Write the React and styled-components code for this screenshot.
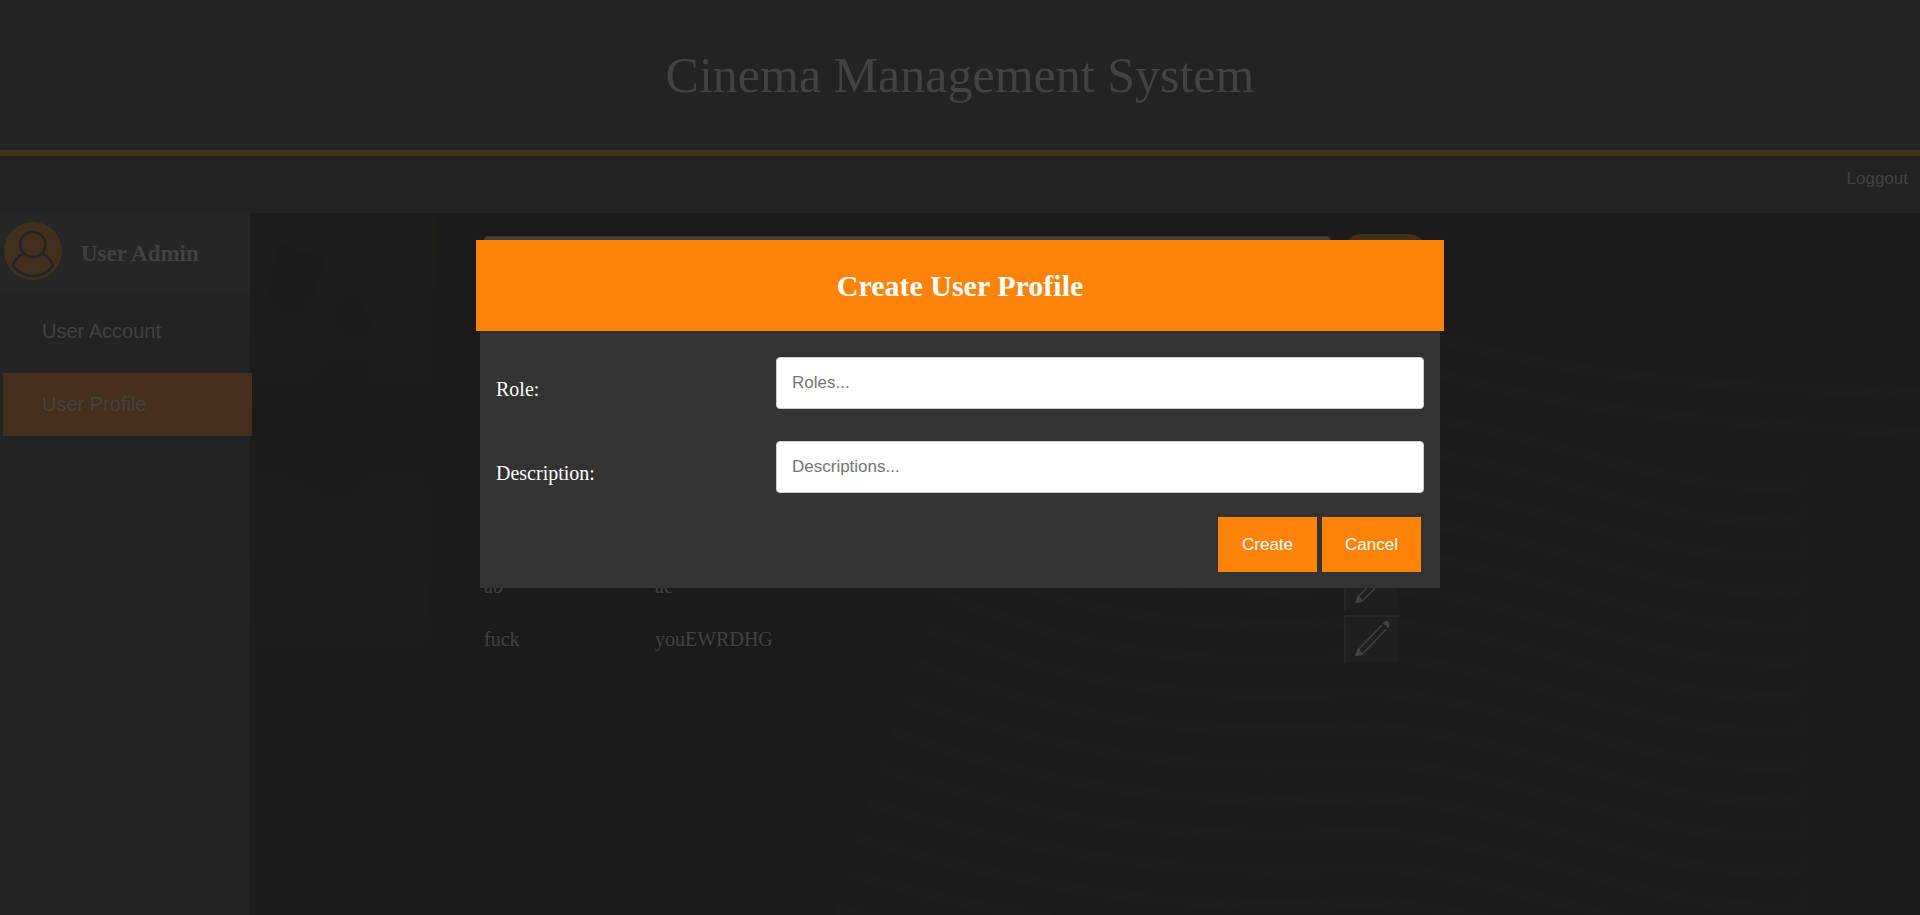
import React from "react";
import styled, { createGlobalStyle } from "styled-components";

const serif = '"Liberation Serif", "Times New Roman", serif';
const sans = '"Liberation Sans", Arial, sans-serif';

const c = {
  page: "#1b1b1b",
  panel: "#232323",
  panelLight: "#262626",
  dimText: "#424242",
  dimOrange: "#442e1c",
  orange: "#ff8307",
  modal: "#333333",
};

const GlobalStyle = createGlobalStyle`
  *, *::before, *::after { box-sizing: border-box; }
  body {
    margin: 0;
    background: ${c.page};
    color: ${c.dimText};
    font-family: ${serif};
    font-size: 20px;
  }
`;

const Page = styled.div`
  min-height: 100vh;
  display: flex;
  flex-direction: column;
`;

const Header = styled.header`
  height: 156px;
  display: flex;
  align-items: center;
  justify-content: center;
  background: ${c.panel};
  border-bottom: 6px solid ${c.dimOrange};
`;

const Title = styled.h1`
  margin: 0;
  font-size: 50px;
  font-weight: 400;
`;

const TopNav = styled.nav`
  height: 57px;
  display: flex;
  justify-content: flex-end;
  align-items: flex-start;
  padding: 13px 12px;
  background: ${c.panel};
`;

const NavLink = styled.a`
  font-family: ${sans};
  font-size: 17px;
  line-height: 20px;
  color: ${c.dimText};
  text-decoration: none;
`;

const Body = styled.div`
  flex: 1;
  display: flex;
`;

const Sidebar = styled.aside`
  width: 250px;
  flex: none;
  background: ${c.panel};
  z-index: 1;
`;

const Identity = styled.div`
  height: 82px;
  display: flex;
  align-items: center;
  gap: 19px;
  padding: 0 4px 6px;
  background: ${c.panelLight};
`;

const Avatar = styled.svg`
  width: 58px;
  height: 58px;
  flex: none;
`;

const IdentityName = styled.h2`
  margin: 6px 0 0;
  font-size: 23px;
  line-height: 26px;
`;

const SideMenu = styled.nav`
  display: flex;
  flex-direction: column;
  gap: 10px;
  padding: 5px 0;
  margin: 0 -2px 0 3px;
`;

const SideLink = styled.a`
  padding: 20px 39px;
  font-family: ${sans};
  font-size: 20px;
  line-height: 23px;
  color: ${c.dimText};
  text-decoration: none;
  background: ${(p) => (p.$active ? c.dimOrange : "transparent")};
`;

const Main = styled.main`
  flex: 1;
  position: relative;
  min-width: 0;
`;

const Backdrop = styled.svg`
  position: absolute;
  inset: 0;
  width: 100%;
  height: 100%;
`;

const Content = styled.div`
  position: relative;
  width: calc(50vw - 16px);
  margin-left: calc(25vw - 246px);
  padding-top: 21px;
`;

const SearchRow = styled.form`
  display: flex;
  align-items: center;
  gap: 11px;
`;

const SearchInput = styled.input`
  flex: 1;
  height: 52px;
  background: ${c.dimText};
  border: 1px solid #383838;
  border-radius: 4px;
`;

const AddButton = styled.button`
  width: 86px;
  height: 56px;
  border: 0;
  border-radius: 20px;
  background: ${c.dimOrange};
`;

const Profiles = styled.table`
  width: 100%;
  margin-top: 270px;
  table-layout: fixed;
  border-collapse: collapse;
`;

const Cell = styled.td`
  width: ${(p) => p.$width || "auto"};
  height: 53px;
  padding: 15px 0 0;
  line-height: 23px;
  vertical-align: top;
`;

const ActionCell = styled(Cell)`
  padding: 2px 0 0;
`;

const EditButton = styled.button`
  display: block;
  width: 56px;
  height: 49px;
  padding: 0;
  background: #1f1f1f;
  border: 2px solid;
  border-color: #262626 #1c1c1c #1c1c1c #262626;

  svg {
    display: block;
    width: 52px;
    height: 44px;
  }
`;

const Dialog = styled.section`
  position: fixed;
  top: 240px;
  left: 25%;
  width: 50%;
  z-index: 2;
  background: ${c.modal};
  color: #fff;
`;

const DialogHeader = styled.header`
  height: 91px;
  margin: 0 -4px;
  display: flex;
  align-items: center;
  justify-content: center;
  background: ${c.orange};
`;

const DialogTitle = styled.h2`
  margin: 0;
  font-size: 30px;
`;

const DialogForm = styled.form`
  display: flex;
  flex-direction: column;
  gap: 32px;
  padding: 26px 16px 16px;
`;

const Field = styled.div`
  display: grid;
  grid-template-columns: 280px 1fr;
`;

const Label = styled.label`
  padding-top: 21px;
  line-height: 23px;
`;

const TextInput = styled.input`
  height: 52px;
  padding: 0 15px;
  border: 1px solid #cccccc;
  border-radius: 4px;
  background: #fff;
  font-family: ${sans};
  font-size: 17px;

  &::placeholder {
    color: #757575;
    opacity: 1;
  }
`;

const Actions = styled.div`
  display: flex;
  justify-content: flex-end;
  gap: 5px;
  margin-top: -8px;
  padding-right: 3px;
`;

const ActionButton = styled.button`
  width: 99px;
  height: 55px;
  padding: 0;
  border: 0;
  background: ${c.orange};
  color: #fff;
  font-family: ${sans};
  font-size: 17px;
`;

const waves = Array.from({ length: 17 }, (_, i) => i * 35);

function WavePattern() {
  return (
    <Backdrop aria-hidden="true" viewBox="0 0 1670 702" preserveAspectRatio="xMinYMin slice">
      <defs>
        <linearGradient id="warm" x1="0" x2="0" y1="0" y2="1">
          <stop offset="0" stopColor="#1e1d1a" />
          <stop offset="0.4" stopColor="#1d1b1a" />
          <stop offset="0.8" stopColor="#1d1b1b" />
          <stop offset="1" stopColor="#1b1b1b" />
        </linearGradient>
      </defs>
      <path d="M0 0H188C180 80 186 200 180 300S184 420 176 480C120 500 60 490 0 500Z" fill="url(#warm)" />
      <g fill={c.page}>
        <path d="M27 35C45 30 60 45 75 46C70 70 60 90 45 104C30 100 18 90 20 80Z" />
        <path d="M85 100C90 80 105 75 112 90S130 120 112 125S90 112 85 100Z" />
        <path d="M50 190C70 160 90 140 110 150S100 200 112 230S100 290 80 280S60 270 42 262Z" />
      </g>
      <g fill="none" stroke="#1e1b1b" strokeWidth="12">
        {waves.map((y) => (
          <path
            key={y}
            d={`M${770 - y / 3} ${y + 135}C850 ${y + 205} 980 ${y + 205} 1100 ${y + 200}S1380 ${y + 265} 1480 ${y + 272}S1540 ${y + 268} 1560 ${y + 260}`}
          />
        ))}
        <path d="M1170 120C1300 160 1450 175 1670 180" />
        <path d="M1170 155C1300 195 1450 210 1670 220" />
      </g>
    </Backdrop>
  );
}

function UserAvatar() {
  return (
    <Avatar viewBox="0 0 58 58" aria-hidden="true">
      <circle cx="29" cy="29" r="29" fill="#41301c" />
      <g fill="none" stroke="#252423" strokeWidth="2.5" strokeLinejoin="round">
        <circle cx="28.8" cy="22.5" r="12.6" />
        <path d="M18.5 32C14 34.5 10.500 39 8.700 43.500C14 50.500 21 54 29 54S44 50.500 49 43.500C47.500 39 43.500 34.500 39 32" />
      </g>
    </Avatar>
  );
}

function PencilIcon() {
  return (
    <svg viewBox="0 0 52 44" aria-hidden="true">
      <g fill="none" stroke="#404040" strokeWidth="1.4">
        <path d="M12.5 31.5L36 7M18 34.5L40 11.5" />
      </g>
      <path d="M9.2 38L11.5 30.5L14 31.5L15 34L18.500 35L15 37.500Z" fill="#424242" />
      <path d="M37 6C37.500 3 41.500 2 43 4.500C44.500 7 43 9.500 42 10.500C41 8.500 39.500 6.500 37 6Z" fill="#424242" />
    </svg>
  );
}

const profiles = [
  { role: "ab", description: "ac" },
  { role: "fuck", description: "youEWRDHG" },
];

export default function App() {
  return (
    <>
      <GlobalStyle />
      <Page>
        <Header>
          <Title>Cinema Management System</Title>
        </Header>
        <TopNav>
          <NavLink href="#logout">Loggout</NavLink>
        </TopNav>
        <Body>
          <Sidebar>
            <Identity>
              <UserAvatar />
              <IdentityName>User Admin</IdentityName>
            </Identity>
            <SideMenu>
              <SideLink href="#account">User Account</SideLink>
              <SideLink href="#profile" $active>User Profile</SideLink>
            </SideMenu>
          </Sidebar>
          <Main>
            <WavePattern />
            <Content>
              <SearchRow>
                <SearchInput type="text" aria-label="Search profiles" />
                <AddButton type="button" aria-label="Search" />
              </SearchRow>
              <Profiles>
                <tbody>
                  {profiles.map((p) => (
                    <tr key={p.role}>
                      <Cell $width="171px">{p.role}</Cell>
                      <Cell>{p.description}</Cell>
                      <ActionCell $width="84px">
                        <EditButton type="button" aria-label={`Edit ${p.role}`}>
                          <PencilIcon />
                        </EditButton>
                      </ActionCell>
                    </tr>
                  ))}
                </tbody>
              </Profiles>
            </Content>
          </Main>
        </Body>
      </Page>
      <Dialog role="dialog" aria-labelledby="dialog-title">
        <DialogHeader>
          <DialogTitle id="dialog-title">Create User Profile</DialogTitle>
        </DialogHeader>
        <DialogForm>
          <Field>
            <Label htmlFor="role">Role:</Label>
            <TextInput id="role" type="text" placeholder="Roles..." />
          </Field>
          <Field>
            <Label htmlFor="description">Description:</Label>
            <TextInput id="description" type="text" placeholder="Descriptions..." />
          </Field>
          <Actions>
            <ActionButton type="button">Create</ActionButton>
            <ActionButton type="button">Cancel</ActionButton>
          </Actions>
        </DialogForm>
      </Dialog>
    </>
  );
}
